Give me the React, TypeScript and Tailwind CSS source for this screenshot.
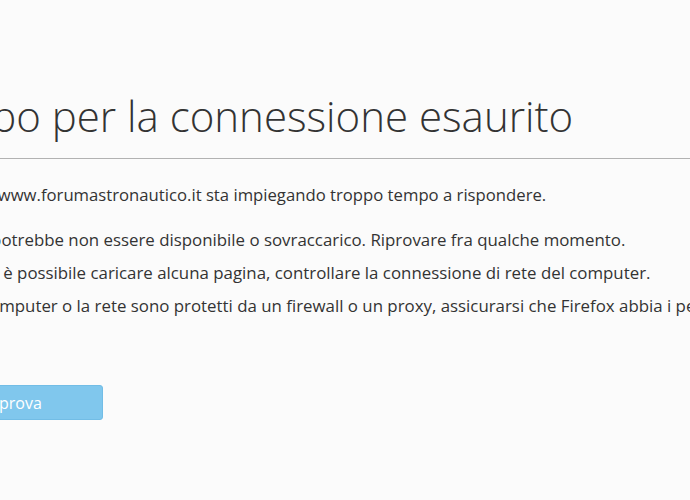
export default function App() {
  return (
    <div className="h-[500px] w-[690px] overflow-hidden bg-[#fbfbfb] text-[#333333] [font-family:'Open_Sans',sans-serif]">
      <div className="-ml-[91px] w-[1200px] whitespace-nowrap pt-[88px]">
        <h1 className="border-b border-[#b2b2b2] pb-[14px] text-[42px] font-light leading-[56px]">
          Tempo per la connessione esaurito
        </h1>
        <p className="mt-[24px] text-[16.7px] leading-[24px]">
          Il server su www.forumastronautico.it sta impiegando troppo tempo a rispondere.
        </p>
        <ul className="mt-[21px] list-disc pl-[36px] text-[16.85px] leading-[24px]">
          <li className="mb-[9px]">
            Il sito potrebbe non essere disponibile o sovraccarico. Riprovare fra qualche momento.
          </li>
          <li className="mb-[9px]">
            Se non è possibile caricare alcuna pagina, controllare la connessione di rete del computer.
          </li>
          <li>
            Se il computer o la rete sono protetti da un firewall o un proxy, assicurarsi che Firefox
            abbia i permessi per accedere al Web.
          </li>
        </ul>
        <button className="mt-[67px] ml-[15px] h-[35px] w-[179px] rounded-[3px] border border-[#72bde6] bg-[#80c7ed] text-center text-[16px] text-white">
          Riprova
        </button>
      </div>
    </div>
  );
}
